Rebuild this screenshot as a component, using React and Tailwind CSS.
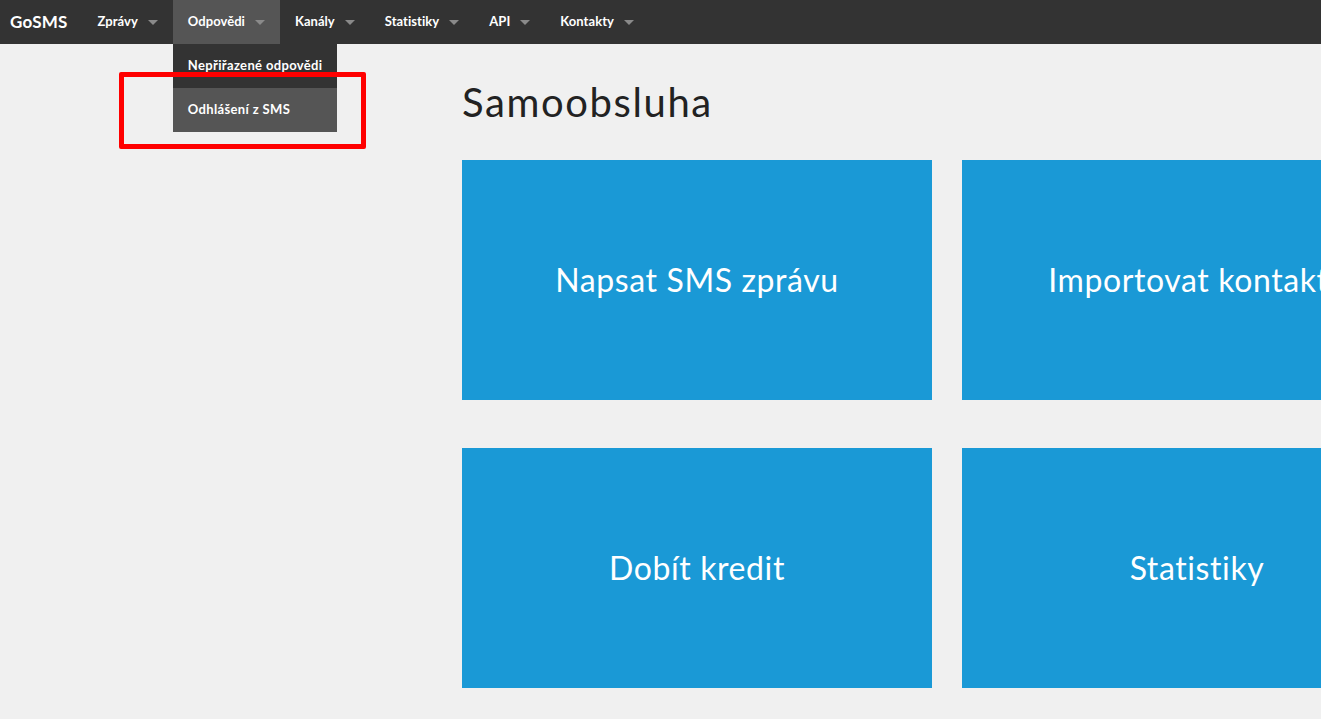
import React from "react"

const navItems = [
  { label: "Zprávy" },
  { label: "Odpovědi", active: true },
  { label: "Kanály" },
  { label: "Statistiky" },
  { label: "API" },
  { label: "Kontakty" },
]

const tiles = ["Napsat SMS zprávu", "Importovat kontakty", "Dobít kredit", "Statistiky"]

const Caret = () => (
  <span className="ml-[10px] inline-block w-0 h-0 border-l-[5px] border-r-[5px] border-t-[5px] border-l-transparent border-r-transparent border-t-[#8a8a8a]" />
)

export default function App() {
  return (
    <div className="min-h-[719px] bg-[#f0f0f0] font-['Lato','Open_Sans',sans-serif] overflow-hidden relative">
      <nav className="h-[44px] bg-[#333333] flex items-stretch text-white text-[13px] font-bold tracking-[0.05px]">
        <div className="pl-[10px] pr-[15px] flex items-center text-[17px] tracking-[0.2px]">GoSMS</div>
        {navItems.map((item) => (
          <div
            key={item.label}
            className={"relative px-[15px] flex items-center " + (item.active ? "bg-[#555555]" : "")}
          >
            <span>{item.label}</span>
            <Caret />
            {item.active && (
              <div className="absolute left-0 top-[44px] w-[164px] bg-[#333333] z-10 tracking-[0.35px]">
                <div className="h-[44px] px-[15px] flex items-center whitespace-nowrap">Nepřiřazené odpovědi</div>
                <div className="h-[44px] px-[15px] flex items-center bg-[#555555] whitespace-nowrap">Odhlášení z SMS</div>
              </div>
            )}
          </div>
        ))}
      </nav>

      <div className="absolute left-[119px] top-[72px] w-[247px] h-[77px] border-[5px] border-[#ff0000] rounded-[2px] z-20" />

      <main className="pl-[462px] pt-[34px]">
        <h1 className="text-[40px] leading-[1.2] tracking-[1.6px] text-[#222222] mb-[34px]">Samoobsluha</h1>
        <div className="grid grid-cols-[470px_470px] gap-x-[30px] gap-y-[48px] w-[970px]">
          {tiles.map((t) => (
            <div
              key={t}
              className="h-[240px] bg-[#1a99d6] flex items-center justify-center text-white text-[32px] tracking-[0.6px] whitespace-nowrap"
            >
              {t}
            </div>
          ))}
        </div>
      </main>
    </div>
  )
}
